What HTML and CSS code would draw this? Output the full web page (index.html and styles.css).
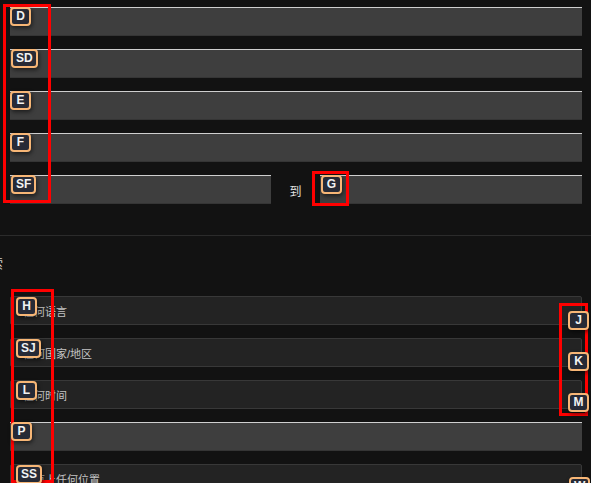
FILE: index.html
```html
<!DOCTYPE html>
<html lang="zh">
<head>
<meta charset="utf-8">
<title>高级搜索</title>
<link rel="stylesheet" href="styles.css">
</head>
<body>
<div class="page">
  <section class="group top">
    <div class="field"></div>
    <div class="field"></div>
    <div class="field"></div>
    <div class="field"></div>
    <div class="range">
      <div class="field"></div>
      <span class="to">到</span>
      <div class="field"></div>
    </div>
  </section>
  <hr class="sep">
  <h2 class="heading"><span>索</span></h2>
  <section class="group bottom">
    <div class="select"><span>任何语言</span></div>
    <div class="select"><span>任何国家/地区</span></div>
    <div class="select"><span>任何时间</span></div>
    <div class="field"></div>
    <div class="select"><span>网页上任何位置</span></div>
  </section>

  <div class="frame f1"></div>
  <div class="frame f2"></div>
  <div class="frame f3"></div>
  <div class="frame f4"></div>

  <span class="hint" style="left:10px;top:7px">D</span>
  <span class="hint" style="left:11px;top:49px">SD</span>
  <span class="hint" style="left:10px;top:91px">E</span>
  <span class="hint" style="left:10px;top:133px">F</span>
  <span class="hint" style="left:11px;top:175px">SF</span>
  <span class="hint" style="left:321px;top:175px">G</span>
  <span class="hint" style="left:16px;top:297px">H</span>
  <span class="hint" style="left:16px;top:339px">SJ</span>
  <span class="hint" style="left:16px;top:381px">L</span>
  <span class="hint" style="left:11px;top:422px">P</span>
  <span class="hint" style="left:16px;top:465px">SS</span>
  <span class="hint" style="left:568px;top:311px">J</span>
  <span class="hint" style="left:568px;top:352px">K</span>
  <span class="hint" style="left:568px;top:393px">M</span>
  <span class="hint" style="left:569px;top:477px">W</span>
</div>
</body>
</html>
```

FILE: styles.css
```css
html, body {
  margin: 0;
  padding: 0;
  background: #121212;
  overflow: hidden;
}

.page {
  position: relative;
  width: 591px;
  height: 483px;
  overflow: hidden;
  font-family: "Liberation Sans", "Noto Sans CJK SC", sans-serif;
}

.group {
  display: flex;
  flex-direction: column;
  gap: 13px;
  padding: 0 9px 0 10px;
}

.top {
  padding-top: 7px;
}

.field {
  box-sizing: border-box;
  height: 29px;
  background: #3e3e3e;
  border-top: 1px solid #cfcfcf;
  box-shadow: inset 0 -1px 0 #353535;
}

.range {
  display: flex;
  align-items: stretch;
}

.range .field:first-child {
  width: 261px;
}

.range .field:last-child {
  flex: 1;
}

.to {
  width: 49px;
  display: flex;
  align-items: center;
  justify-content: center;
  color: #e0e0e0;
  font-size: 12px;
  padding-top: 1px;
}

.sep {
  margin: 31px 0 0;
  border: 0;
  height: 1px;
  background: #2b2b2b;
}

.heading {
  margin: 20px 0 0 -10px;
  height: 16px;
  font-size: 13px;
  font-weight: normal;
  line-height: 16px;
  color: #cfcfcf;
}

.bottom {
  margin-top: 24px;
}

.select {
  box-sizing: border-box;
  height: 29px;
  background: #232323;
  border: 1px solid #383838;
  border-radius: 2px;
  display: flex;
  align-items: center;
  padding-left: 12px;
  color: #c4c4c4;
  font-size: 11px;
}

.frame {
  position: absolute;
  box-sizing: border-box;
  border: 3px solid #ff0000;
}

.f1 { left: 3px; top: 4px; width: 48px; height: 199px; }
.f2 { left: 11px; top: 289px; width: 43px; height: 194px; }
.f3 { left: 559px; top: 303px; width: 29px; height: 113px; }
.f4 { left: 312px; top: 171px; width: 37px; height: 35px; }

.hint {
  position: absolute;
  box-sizing: border-box;
  min-width: 21px;
  height: 19px;
  padding: 0 3px;
  border: 2px solid #f7b676;
  border-radius: 4px;
  background: #272a36;
  color: #f2f2f2;
  font-family: "Liberation Sans", sans-serif;
  font-weight: bold;
  font-size: 12px;
  line-height: 15px;
  text-align: center;
  box-shadow: 1px 2px 4px rgba(0, 0, 0, 0.55);
}
```
